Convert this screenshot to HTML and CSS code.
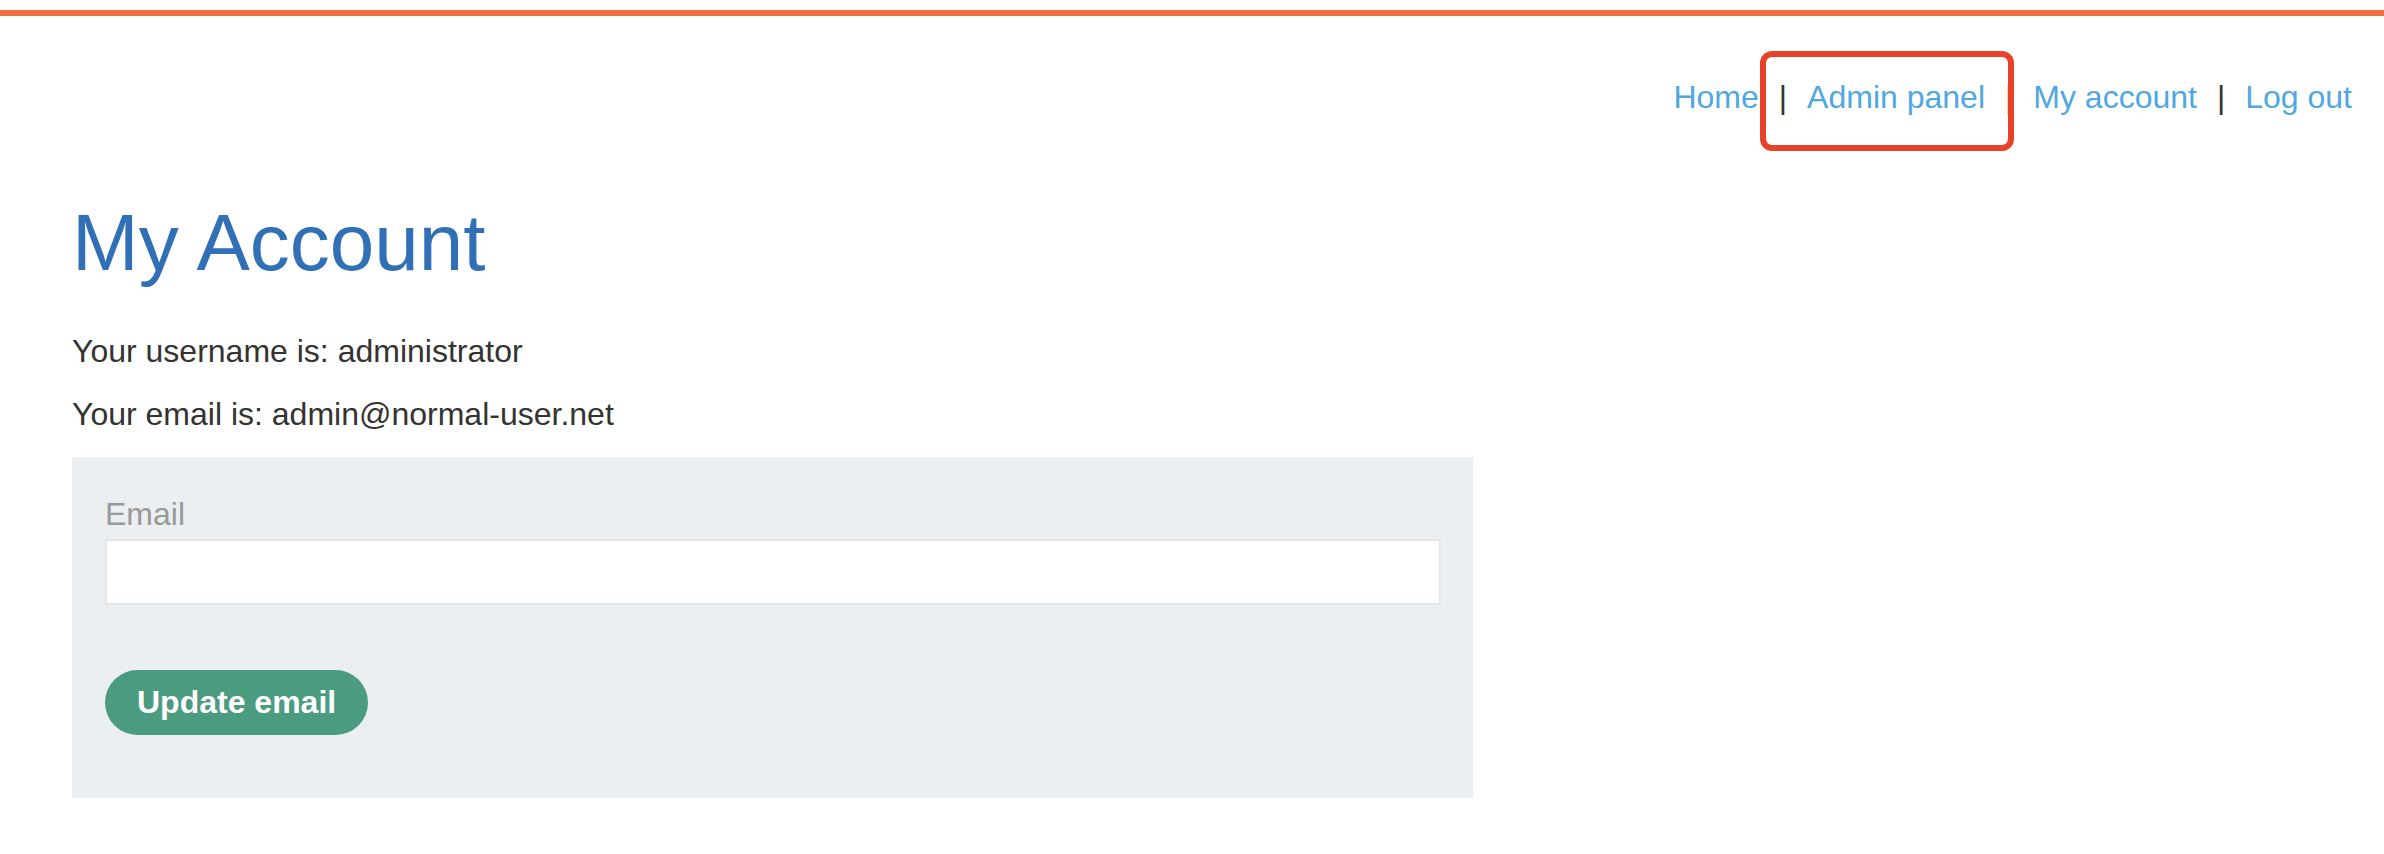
FILE: index.html
```html
<!DOCTYPE html>
<html lang="en">
<head>
<meta charset="utf-8">
<title>My Account</title>
<link rel="stylesheet" href="styles.css">
</head>
<body>
<header class="header">
  <div class="accent"></div>
  <nav class="top-links">
    <a href="#" class="link">Home</a>
    <span class="sep">|</span>
    <a href="#" class="link">Admin panel</a>
    <span class="sep">|</span>
    <a href="#" class="link">My account</a>
    <span class="sep">|</span>
    <a href="#" class="link">Log out</a>
  </nav>
  <span class="highlight"></span>
</header>
<main class="main">
  <h1 class="title">My Account</h1>
  <p class="info">Your username is: administrator</p>
  <p class="info info-last">Your email is: admin@normal-user.net</p>
  <form class="panel">
    <label class="label" for="email">Email</label>
    <input class="input" id="email" type="email">
    <button class="button" type="button">Update email</button>
  </form>
</main>
</body>
</html>
```

FILE: styles.css
```css
html, body {
  margin: 0;
  padding: 0;
  background: #ffffff;
}

body {
  font-family: "Liberation Sans", Arial, sans-serif;
  color: #333332;
}

.header {
  position: relative;
  padding-top: 10px;
}

.accent {
  height: 6px;
  background: #ee7143;
}

.top-links {
  display: flex;
  justify-content: flex-end;
  align-items: center;
  gap: 20px;
  margin-top: 61px;
  padding-right: 32px;
  font-size: 32px;
  line-height: 40px;
}

.link {
  color: #50a7e1;
  text-decoration: none;
}

.sep {
  color: #333332;
}

.highlight {
  position: absolute;
  top: 51px;
  right: 370px;
  width: 254px;
  height: 100px;
  box-sizing: border-box;
  border: 6px solid #e8432a;
  border-radius: 12px;
}

.main {
  padding-left: 72px;
}

.title {
  margin: 81px 0 0;
  font-size: 80px;
  line-height: 90px;
  font-weight: normal;
  color: #316fb7;
}

.info {
  margin: 43px 0 0;
  font-size: 32px;
  line-height: 40px;
}

.info-last {
  margin-top: 23px;
}

.panel {
  display: flex;
  flex-direction: column;
  align-items: flex-start;
  box-sizing: border-box;
  width: 1401px;
  margin-top: 23px;
  padding: 37px 32px 63px 33px;
  background: #ebeff2;
}

.label {
  font-size: 32px;
  line-height: 40px;
  color: #999999;
}

.input {
  box-sizing: border-box;
  width: 100%;
  height: 66px;
  margin: 5px 0 0;
  border: 2px solid #e4e6e8;
  background: #ffffff;
  outline: none;
}

.button {
  margin-top: 65px;
  height: 65px;
  padding: 0 32px;
  border: none;
  border-radius: 33px;
  background: #4a9b80;
  color: #ffffff;
  font-family: "Liberation Sans", Arial, sans-serif;
  font-weight: bold;
  font-size: 32px;
  line-height: 65px;
}
```
